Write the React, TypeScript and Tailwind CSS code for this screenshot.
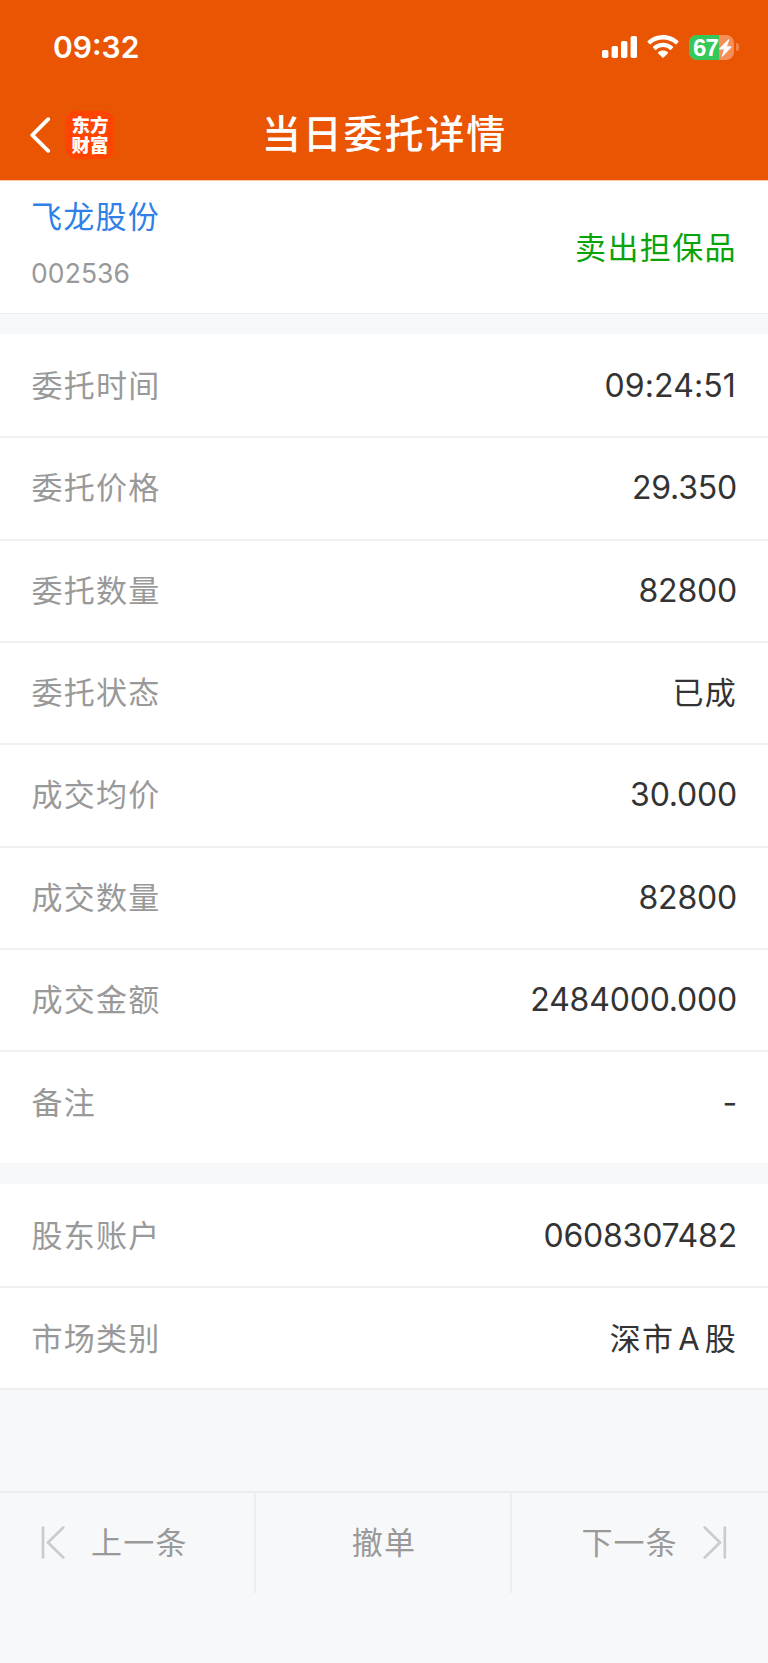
import type { ReactNode } from "react"

interface Item {
  label: string;
  value: ReactNode;
}

const orderItems: Item[] = [
  { label: "委托时间", value: <span className="mr-[1px] tracking-[0.1px]">09:24:51</span> },
  { label: "委托价格", value: "29.350" },
  { label: "委托数量", value: "82800" },
  { label: "委托状态", value: <Han>已成</Han> },
  { label: "成交均价", value: "30.000" },
  { label: "成交数量", value: "82800" },
  { label: "成交金额", value: "2484000.000" },
  { label: "备注", value: "-" },
]

const accountItems: Item[] = [
  { label: "股东账户", value: "0608307482" },
  { label: "市场类别", value: <Han>深市<span className="mx-[4px]">A</span>股</Han> },
]

function Han({ children }: { children: ReactNode }) {
  return <span className="text-[31px] tracking-[1.2px]">{children}</span>
}

function StatusBar() {
  return (
    <div className="flex h-[94px] items-center justify-between pl-[53px] pr-[29px]">
      <span className="text-[30px] font-semibold leading-none">09:32</span>
      <div className="flex items-center">
        <svg width="36" height="24" viewBox="0 0 36 24" fill="#fff">
          <rect x="0" y="15" width="6.4" height="8" rx="1.8" />
          <rect x="9.6" y="11" width="6.4" height="12" rx="1.8" />
          <rect x="19" y="6" width="6.4" height="17" rx="1.8" />
          <rect x="28.6" y="1" width="6.4" height="22" rx="1.8" />
        </svg>
        <svg className="ml-[9px]" width="32" height="24" viewBox="0 0 32 24" fill="#fff">
          <path d="M16 0C10 0 4.700 2.300.700 6Q.200 6.600.700 7.200L2.500 9.100Q3.200 9.700 3.800 9.100C7 6.100 11.300 4.500 16 4.500S25 6.100 28.200 9.100Q28.800 9.700 29.500 9.100L31.300 7.200Q31.800 6.600 31.300 6C27.300 2.300 22 0 16 0Z" />
          <path d="M16 7.800C12.200 7.800 8.700 9.200 6.100 11.600Q5.500 12.200 6.100 12.800L8 14.700Q8.600 15.200 9.200 14.700C11 13.100 13.400 12.100 16 12.100S21 13.100 22.800 14.700Q23.400 15.200 24 14.700L25.900 12.800Q26.500 12.200 25.900 11.600C23.300 9.200 19.800 7.800 16 7.800Z" />
          <path d="M16 15.600C14.100 15.600 12.500 16.200 11.200 17.200Q10.600 17.800 11.200 18.400L15.400 22.600Q16 23.100 16.600 22.600L20.800 18.400Q21.400 17.800 20.800 17.200C19.500 16.200 17.900 15.600 16 15.600Z" />
        </svg>
        <div className="relative ml-[10px] flex h-[25px] w-[45px] items-center rounded-[8px] bg-[#f48f58]">
          <div className="h-full w-[30px] rounded-l-[8px] bg-[#34c759]" />
          <span className="absolute left-[4px] top-0 font-['Liberation_Sans',sans-serif] text-[24px] font-bold leading-[25px] tracking-[-0.8px]">67</span>
          <svg className="absolute left-[30px] top-[4px]" width="13" height="18" viewBox="0 0 13 18" fill="#fff">
            <path d="M9.500.300.300 9.600Q-.200 10.600.900 10.600H5L2.800 17.200Q2.800 18 3.600 17.600L12.500 8.200Q13 7.200 11.900 7.200H7.900L10.300.900Q10.300 0 9.500.300Z" />
          </svg>
        </div>
        <div className="ml-[2px] h-[8px] w-[3px] rounded-r-full bg-[#f1834a]" />
      </div>
    </div>
  )
}

function NavBar() {
  return (
    <div className="grid h-[86px] grid-cols-[1fr_auto_1fr] items-center pb-[7px]">
      <div className="flex items-center pl-[30px] pt-[3px]">
        <svg width="21" height="36" viewBox="0 0 21 36" fill="none" stroke="#fff" strokeWidth="3.800" strokeLinecap="round" strokeLinejoin="round">
          <path d="M18.200 2.200 2.300 18.200l15.900 15.600" />
        </svg>
        <div className="ml-[15px] flex h-[48px] w-[48px] flex-col items-center justify-center rounded-[10px] bg-[#ff4400] text-[18.500px] font-black leading-[20px]">
          <span>东方</span>
          <span>财富</span>
        </div>
      </div>
      <h1 className="pl-[1px] text-[39px] font-medium leading-none tracking-[1.900px]">当日委托详情</h1>
    </div>
  )
}

function Row({ label, value }: Item) {
  return (
    <div className="flex h-[102.330px] items-center justify-between border-b-2 border-[#f0f0f0] pl-[31.500px] pr-[31px] last:border-b-0">
      <span className="text-[31px] tracking-[1.250px] text-[#999]">{label}</span>
      <span className="text-[32px] tracking-[-0.200px] text-[#333]">{value}</span>
    </div>
  )
}

export default function App() {
  return (
    <div className="flex h-[1663px] w-[768px] flex-col bg-[#f7f8fa] font-['Inter','Noto_Sans_CJK_SC',sans-serif]">
      <header className="h-[180px] bg-[#ea5504] text-white">
        <StatusBar />
        <NavBar />
      </header>

      <section className="flex h-[134px] items-center justify-between border-b border-t border-b-[#eee] border-t-[#fbc6ab] bg-white px-[31px]">
        <div className="flex flex-col pb-[9px]">
          <span className="text-[31px] leading-[44px] tracking-[1.250px] text-[#2f80e7]">飞龙股份</span>
          <span className="mt-4 text-[26.500px] leading-[36px] tracking-[0.100px] text-[#999]">002536</span>
        </div>
        <span className="pt-[2px] text-[31px] tracking-[1.400px] text-[#0aa30a]">卖出担保品</span>
      </section>

      <section className="mt-5 h-[829px] bg-white pt-[2px]">
        {orderItems.map((item) => (
          <Row key={item.label} {...item} />
        ))}
      </section>

      <section className="mt-[21px] h-[206px] border-b-2 border-[#eee] bg-white pt-[2px]">
        {accountItems.map((item) => (
          <Row key={item.label} {...item} />
        ))}
      </section>

      <footer className="mt-[101px] grid h-[102px] grid-cols-3 border-t-2 border-[#eee] text-[31px] tracking-[1.200px] text-[#999]">
        <button className="flex items-center border-r-2 border-[#eee] pl-[41px]">
          <svg width="24" height="34" viewBox="0 0 24 34" fill="none" stroke="#ccc" strokeWidth="2.700" strokeLinecap="round" strokeLinejoin="round">
            <path d="M2 1.500v30M22.300 1.500 7 16.500l15.300 15" />
          </svg>
          <span className="ml-[26px]">上一条</span>
        </button>
        <button className="border-r-2 border-[#eee] pl-[2px]">撤单</button>
        <button className="flex items-center justify-end pr-[41px]">
          <span className="mr-[25px]">下一条</span>
          <svg width="24" height="34" viewBox="0 0 24 34" fill="none" stroke="#ccc" strokeWidth="2.700" strokeLinecap="round" strokeLinejoin="round">
            <path d="M21.800 1.500v30M1.700 1.500 17 16.500l-15.300 15" />
          </svg>
        </button>
      </footer>
    </div>
  )
}
